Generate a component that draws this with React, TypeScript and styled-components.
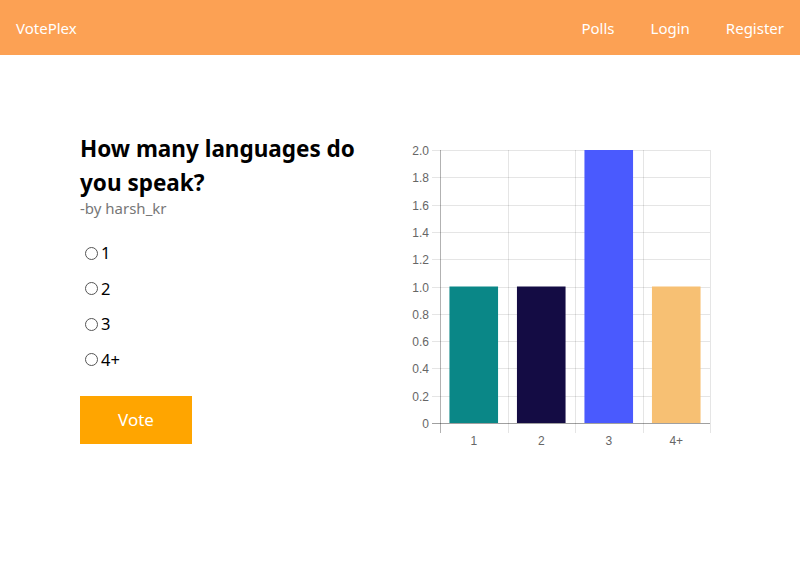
import React from "react";
import styled, { createGlobalStyle } from "styled-components";

const Global = createGlobalStyle`
  html, body { margin: 0; padding: 0; background: #fff; }
  body { font-family: "Noto Sans", "Open Sans", sans-serif; color: #000; }
`;

const NavBar = styled.nav`
  height: 55px;
  background: #fca154;
  display: flex;
  align-items: center;
  justify-content: space-between;
  padding: 0 16px;
`;

const Brand = styled.div`
  color: #fff;
  font-size: 15px;
`;

const NavLinks = styled.div`
  display: flex;
  gap: 36px;
`;

const NavLink = styled.a`
  color: #fff;
  font-size: 15px;
  text-decoration: none;
`;

const Main = styled.main`
  display: flex;
  padding: 77px 0 0 80px;
`;

const LeftCol = styled.section`
  width: 320px;
  display: flex;
  flex-direction: column;
`;

const Title = styled.h2`
  margin: 0;
  font-size: 22.5px;
  font-weight: 700;
  line-height: 34px;
  width: 300px;
`;

const Author = styled.div`
  color: #777;
  font-size: 15px;
  line-height: 20px;
  margin-top: -2px;
`;

const Options = styled.div`
  display: flex;
  flex-direction: column;
  gap: 11.5px;
  margin-top: 23px;
`;

const OptionRow = styled.label`
  display: flex;
  align-items: center;
  font-size: 16.5px;
  line-height: 24px;
  height: 24px;
`;

const Radio = styled.input`
  appearance: none;
  box-sizing: border-box;
  width: 13px;
  height: 13px;
  margin: 0 3px 0 5px;
  border: 1px solid #555;
  border-radius: 50%;
  background: #fff;
`;

const VoteButton = styled.button`
  margin-top: 24px;
  width: 112px;
  height: 48px;
  border: none;
  background: #ffa500;
  color: #fff;
  font-family: inherit;
  font-size: 17px;
  cursor: pointer;
`;

const ChartWrap = styled.div`
  margin-top: 8px;
  width: 320px;
  height: 320px;
`;

const data = [
  { label: "1", value: 1, color: "#0a8787" },
  { label: "2", value: 1, color: "#140c44" },
  { label: "3", value: 2, color: "#4a5afe" },
  { label: "4+", value: 1, color: "#f7c073" },
];

function Chart() {
  const x0 = 40;
  const x1 = 310;
  const yTop = 10;
  const yZero = 283;
  const scale = (yZero - yTop) / 2;
  const cat = (x1 - x0) / data.length;
  const barW = cat * 0.72;
  const ticks = [0, 0.2, 0.4, 0.6, 0.8, 1.0, 1.2, 1.4, 1.6, 1.8, 2.0];
  return (
    <svg width="320" height="320" viewBox="0 0 320 320">
      {ticks.map((t) => {
        const y = Math.round(yZero - t * scale) + 0.5;
        return (
          <g key={t}>
            <line x1={32} x2={x1} y1={y} y2={y} stroke="rgba(0,0,0,0.1)" strokeWidth={1} />
            <text
              x={29}
              y={y}
              textAnchor="end"
              dominantBaseline="central"
              fontFamily="'Liberation Sans', Arial, sans-serif"
              fontSize="12"
              fill="#666"
            >
              {t === 0 ? "0" : t.toFixed(1)}
            </text>
          </g>
        );
      })}
      {[1, 2, 3, 4].map((i) => {
        const x = Math.round(x0 + i * cat) + 0.5;
        return <line key={i} x1={x} x2={x} y1={yTop} y2={yZero + 10} stroke="rgba(0,0,0,0.1)" />;
      })}
      {data.map((d, i) => {
        const bx = x0 + i * cat + (cat - barW) / 2;
        const h = d.value * scale;
        return <rect key={d.label} x={bx} y={yZero - h} width={barW} height={h} fill={d.color} />;
      })}
      <line x1={x0 + 0.5} x2={x0 + 0.5} y1={yTop} y2={yZero + 10} stroke="rgba(0,0,0,0.3)" />
      <line x1={32} x2={x1} y1={yZero + 0.5} y2={yZero + 0.5} stroke="rgba(0,0,0,0.3)" />
      {data.map((d, i) => (
        <text
          key={d.label}
          x={x0 + i * cat + cat / 2}
          y={305}
          textAnchor="middle"
          fontFamily="'Liberation Sans', Arial, sans-serif"
          fontSize="12"
          fill="#666"
        >
          {d.label}
        </text>
      ))}
    </svg>
  );
}

export default function App() {
  return (
    <>
      <Global />
      <NavBar>
        <Brand>VotePlex</Brand>
        <NavLinks>
          <NavLink>Polls</NavLink>
          <NavLink>Login</NavLink>
          <NavLink>Register</NavLink>
        </NavLinks>
      </NavBar>
      <Main>
        <LeftCol>
          <Title>How many languages do you speak?</Title>
          <Author>-by harsh_kr</Author>
          <Options>
            {data.map((d) => (
              <OptionRow key={d.label}>
                <Radio type="radio" name="opt" />
                {d.label}
              </OptionRow>
            ))}
          </Options>
          <VoteButton>Vote</VoteButton>
        </LeftCol>
        <ChartWrap>
          <Chart />
        </ChartWrap>
      </Main>
    </>
  );
}
